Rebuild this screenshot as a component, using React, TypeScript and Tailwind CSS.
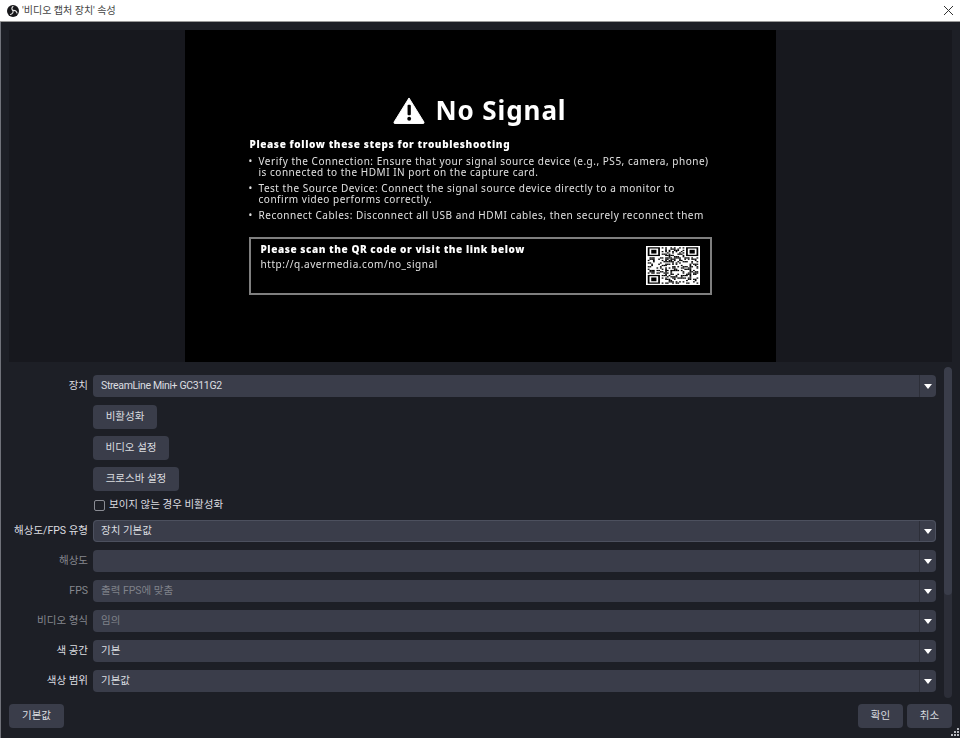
const uiFont = 'font-["Roboto","Noto_Sans_CJK_KR",sans-serif]'

function ObsLogo() {
  return (
    <svg width="12" height="12" viewBox="0 0 24 24" className="shrink-0">
      <circle cx="12" cy="12" r="12" fill="#18181b" />
      <g fill="none" stroke="#e8e8e8" strokeWidth="2.2" strokeLinecap="round">
        <path d="M12 11C9 9 9 5 12 3" />
        <path d="M12 11C13 14.5 11 18 7 19" />
        <path d="M12 11C15.5 10 19 12 20 16" />
      </g>
    </svg>
  )
}

// finder square for the QR image
const isFinder = (x: number, y: number, size: number) =>
  (x < 8 && y < 8) || (x >= size - 8 && y < 8) || (x < 8 && y >= size - 8)

function QrCode() {
  const size = 29
  const cells: { x: number; y: number }[] = []
  for (let y = 0; y < size; y++) {
    for (let x = 0; x < size; x++) {
      if (isFinder(x, y, size)) continue
      const h = (x * 7 + y * 13 + x * y * 3 + ((x * x) ^ (y * 5))) % 5
      if (h < 2) cells.push({ x, y })
    }
  }
  const finders = [
    [0, 0],
    [size - 7, 0],
    [0, size - 7],
  ]
  return (
    <svg width="54" height="39" viewBox="-1 -1 31 31" preserveAspectRatio="none" className="bg-white">
      {cells.map(c => (
        <rect key={`${c.x}-${c.y}`} x={c.x} y={c.y} width="1" height="1" fill="#000" />
      ))}
      {finders.map(([x, y]) => (
        <g key={`${x}-${y}`}>
          <rect x={x + 0.5} y={y + 0.5} width="6" height="6" fill="none" stroke="#000" />
          <rect x={x + 2} y={y + 2} width="3" height="3" fill="#000" />
        </g>
      ))}
    </svg>
  )
}

function NoSignal() {
  return (
    <div className="w-[591px] h-full bg-black text-[#e0e0e0] font-['Noto_Sans',sans-serif] pl-[64px] overflow-hidden blur-[0.4px]">
      <div className="flex items-center h-[32px] mt-[64px] ml-[144px] gap-[11px]">
        <svg width="32" height="27" viewBox="0 0 33 28">
          <path
            d="M16.5 1 L32 26 Q32.5 27.5 31 27.5 H2 Q0.5 27.5 1 26 Z"
            fill="#fff"
            stroke="#fff"
            strokeLinejoin="round"
          />
          <rect x="15" y="8" width="3.4" height="11" rx="1" fill="#000" />
          <circle cx="16.7" cy="22.5" r="2" fill="#000" />
        </svg>
        <span className="text-[26px] leading-[32px] font-bold text-white tracking-[0.9px]">No Signal</span>
      </div>
      <p className="mt-[11px] ml-[1px] text-[10px] leading-[14px] font-black text-white tracking-[0.6px]">
        Please follow these steps for troubleshooting
      </p>
      <ul className="mt-[5px] text-[10px] leading-[10.5px] tracking-[0.52px] flex flex-col gap-[6px]">
        {[
          <>
            Verify the Connection: Ensure that your signal source device (e.g., PS5, camera, phone)
            <br />
            is connected to the HDMI IN port on the capture card.
          </>,
          <>
            Test the Source Device: Connect the signal source device directly to a monitor to
            <br />
            confirm video performs correctly.
          </>,
          <>Reconnect Cables: Disconnect all USB and HDMI cables, then securely reconnect them</>,
        ].map((line, i) => (
          <li key={i} className="flex whitespace-nowrap">
            <span className="w-[10px] shrink-0">•</span>
            <span>{line}</span>
          </li>
        ))}
      </ul>
      <div className="mt-[16px] w-[463px] h-[58px] border-2 border-[#7f7f7f] flex justify-between pl-[10px] pr-[10px]">
        <div className="pt-[3px]">
          <p className="text-[10px] leading-[14px] font-black text-white tracking-[0.55px]">
            Please scan the QR code or visit the link below
          </p>
          <p className="mt-[2px] text-[10px] leading-[13px] tracking-[0.56px]">http://q.avermedia.com/no_signal</p>
        </div>
        <div className="pt-[7px]">
          <QrCode />
        </div>
      </div>
    </div>
  )
}

function Select({
  value,
  disabled,
  focused,
  valueClassName = '',
}: {
  value: string
  disabled?: boolean
  focused?: boolean
  valueClassName?: string
}) {
  return (
    <div
      className={`flex-1 h-[22px] flex items-center rounded-[4px] bg-[#3a3d4a] ${
        focused ? 'outline outline-[#4c505e] -outline-offset-1' : ''
      }`}
    >
      <span
        className={`flex-1 pl-[8px] text-[10.5px] leading-none ${valueClassName} ${
          disabled ? 'text-[#7f8189]' : 'text-[#dcdde0]'
        }`}
      >
        {value}
      </span>
      <span className="w-[17px] h-full border-l border-[#2d2f39] flex items-center justify-center">
        <svg width="8" height="5" viewBox="0 0 8 5">
          <path d="M0 0H8L4 5Z" fill="#fff" />
        </svg>
      </span>
    </div>
  )
}

function Row({
  label,
  value,
  disabled,
  focused,
  valueClassName,
}: {
  label: string
  value: string
  disabled?: boolean
  focused?: boolean
  valueClassName?: string
}) {
  return (
    <div className="flex items-center h-[22px]">
      <span className={`w-[79px] mr-[5px] text-right text-[10.5px] leading-none ${disabled ? 'text-[#85878e]' : 'text-[#dcdde0]'}`}>
        {label}
      </span>
      <Select value={value} disabled={disabled} focused={focused} valueClassName={valueClassName} />
    </div>
  )
}

function Button({ children, className = '' }: { children: string; className?: string }) {
  return (
    <button className={`h-[24px] rounded-[4px] bg-[#3a3d4a] text-[10.5px] leading-none text-[#dcdde0] ${className}`}>
      {children}
    </button>
  )
}

export default function App() {
  return (
    <div className={`w-[960px] h-[738px] flex flex-col bg-[#1d1f26] overflow-hidden relative ${uiFont}`}>
      <div className="h-[22px] shrink-0 bg-white flex items-center pl-[7px] pr-[6px] gap-[3px] border-b border-[#9a9a9a]">
        <ObsLogo />
        <span className="flex-1 text-[10px] leading-none text-[#444]">'비디오 캡처 장치' 속성</span>
        <svg width="11" height="11" viewBox="0 0 11 11">
          <path d="M1 1L10 10M10 1L1 10" stroke="#333" strokeWidth="1" />
        </svg>
      </div>

      <div className="flex-1 flex flex-col border-l border-[#70727a] pl-[8px] pr-[8px]">
        <div className="h-[332px] mt-[8px] shrink-0 bg-[#17181e] flex justify-center pr-[1px]">
          <NoSignal />
        </div>

        <div className="flex mt-[5px] h-[331px] shrink-0">
          <div className="flex-1 pt-[8px] pr-[8px] flex flex-col">
            <Row label="장치" value="StreamLine Mini+ GC311G2" valueClassName="tracking-[-0.35px]" />
            <div className="ml-[84px] mt-[8px] flex flex-col items-start gap-[7px]">
              <Button className="w-[64px]">비활성화</Button>
              <Button className="w-[76px]">비디오 설정</Button>
              <Button className="w-[86px]">크로스바 설정</Button>
            </div>
            <label className="ml-[85px] mt-[6px] h-[16px] flex items-center gap-[4px] text-[10.5px] leading-none text-[#dcdde0]">
              <span className="w-[11px] h-[11px] rounded-[2px] border border-[#8a8c94]" />
              보이지 않는 경우 비활성화
            </label>
            <div className="mt-[7px] flex flex-col gap-[8px]">
              <Row label="해상도/FPS 유형" value="장치 기본값" focused />
              <Row label="해상도" value="" disabled />
              <Row label="FPS" value="출력 FPS에 맞춤" disabled />
              <Row label="비디오 형식" value="임의" disabled />
              <Row label="색 공간" value="기본" />
              <Row label="색상 범위" value="기본값" />
            </div>
          </div>
          <div className="w-[8px] h-full rounded-[4px] bg-[#2c2e38] overflow-hidden">
            <div className="h-[228px] rounded-[4px] bg-[#3a3d4a]" />
          </div>
        </div>

        <div className="flex mt-[6px]">
          <Button className="w-[55px]">기본값</Button>
          <div className="flex-1" />
          <Button className="w-[45px] mr-[4px]">확인</Button>
          <Button className="w-[45px]">취소</Button>
        </div>
      </div>

      <svg width="9" height="9" viewBox="0 0 9 9" className="absolute right-[1px] bottom-[1px]">
        <g fill="#b8bac0">
          <rect x="7" y="0" width="2" height="2" />
          <rect x="4" y="3" width="2" height="2" />
          <rect x="7" y="3" width="2" height="2" />
          <rect x="1" y="6" width="2" height="2" />
          <rect x="4" y="6" width="2" height="2" />
          <rect x="7" y="6" width="2" height="2" />
        </g>
      </svg>
    </div>
  )
}
